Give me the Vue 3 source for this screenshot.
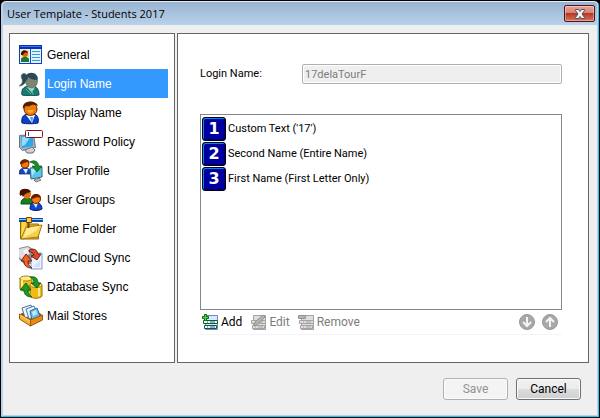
<template>
  <div class="window">
    <header class="title-bar">
      <h1 class="title">User Template - Students 2017</h1>
      <button class="close-button" type="button" aria-label="Close">
        <svg width="12" height="10" viewBox="0 0 12 10">
          <path d="M1.5.5h3L6 2.500 7.500.5h3v1L8 5l2.500 3.500v1h-3L6 7.500l-1.500 2h-3v-1L4 5 1.500 1.500z" fill="#f4f4f6" stroke="#4c5064" />
        </svg>
      </button>
    </header>

    <main class="content">
      <nav class="sidebar">
        <a
          v-for="(item, index) in sections"
          :key="item.title"
          href="#"
          class="nav-item"
          :class="{ selected: index === activeSection }"
          @click.prevent="activeSection = index"
        >
          <svg v-if="item.icon === 'general'" class="nav-icon" viewBox="0 0 24 24">
            <rect x=".5" y="3.500" width="22" height="17" fill="#dff2ff" stroke="#1040b8" />
            <path d="M0 2h23v4H0z" fill="#0830b0" />
            <path d="M1 3.500h21" stroke="#3a78e8" />
            <path d="M11.500 6v14" stroke="#1050c8" />
            <path d="M13 8.500h8M13 11.500h8M13 14.500h8M13 17.500h8" stroke="#3c98d8" />
            <path d="M2 7h8v12H2z" fill="#f6e49a" />
            <path d="M2 19v-3c2-3 6-3 8 0v3z" fill="#187838" />
            <circle cx="6" cy="11" r="3" fill="#e06010" />
            <path d="M2 12c-1-6 7-6 7-2-3-1-4 0-5 2z" fill="#401400" />
          </svg>

          <svg v-else-if="item.icon === 'login'" class="nav-icon" viewBox="0 0 24 24">
            <path d="M7 2C3 0 1 4 3 7c1 3 0 5-3 7 5 0 7-4 7-8z" fill="#244860" stroke="#5a8448" stroke-width=".7" />
            <path d="M3 23c-1-5 1-8 6-9h5c5 1 6 5 6 9-4 1-13 1-17 0z" fill="#187c68" stroke="#0c5060" />
            <path d="m8 15 5 6 3-6z" fill="#b0d4d4" />
            <ellipse cx="12.500" cy="9" rx="6" ry="7" fill="#7c8474" stroke="#5c7058" stroke-width=".7" />
            <path d="M5 12C3 0 15-2 18 4c1 1 1 3 0 4-4 0-7-1-9-3 0 3-2 3-4 7z" fill="#2c4858" />
            <path d="m13 18 1 5M7 17l5 5" stroke="#58b49c" />
          </svg>

          <svg v-else-if="item.icon === 'display'" class="nav-icon" viewBox="0 0 24 24">
            <path d="M3 22c-1-5 1-8 5-9h7c4 1 5 5 4 9-3 1-13 1-16 0z" fill="#0c40c8" stroke="#002070" />
            <path d="m7 14 6 8 3-8z" fill="#f4f8ff" />
            <path d="m11 16 2 6 1-6z" fill="#48a0e8" />
            <ellipse cx="11.500" cy="8" rx="6.500" ry="6.500" fill="#f07c08" stroke="#702000" />
            <path d="M4 8C2-1 17-2 19 5c-3-1-5-2-8 0-3 1-5-1-7 3z" fill="#541c00" />
            <path d="M8 9c2 4 5 4 7 0" fill="#ffb030" />
          </svg>

          <svg v-else-if="item.icon === 'password'" class="nav-icon" viewBox="0 0 24 24">
            <path d="m.5 5.500 14-1 2 13-13 3-3-3z" fill="#a8b0bc" stroke="#687480" />
            <path d="m2 6 12-1v11L3 18z" fill="#28a8e8" />
            <path d="m3 7 9-1-6 9-3 1z" fill="#94dcfb" />
            <path d="m6 20 7-3 3 3-2 3H8z" fill="#d0d0d6" stroke="#707070" />
            <rect x="6.500" y=".5" width="17" height="7" rx="1" fill="#fff" stroke="#8c1018" />
            <path d="M9.500 2v4" stroke="#1850a8" />
          </svg>

          <svg v-else-if="item.icon === 'profile'" class="nav-icon" viewBox="0 0 24 24">
            <path d="M0 15c0-4 2-6 6-6s6 2 6 6z" fill="#1048c8" stroke="#082060" stroke-width=".7" />
            <path d="m4 10 3 5 2-5z" fill="#e0f0ff" />
            <circle cx="6" cy="5" r="4" fill="#f47808" stroke="#903000" />
            <path d="M1 5c0-6 9-6 10-1C7 1 5 6 1 5z" fill="#702400" />
            <path d="m11 9 12-1v10l-11 2z" fill="#58c8f0" stroke="#446078" />
            <path d="m12 10 7-1-6 8z" fill="#a4e8ff" />
            <path d="m15 21 5-2 2 2-5 2z" fill="#b8bcc4" stroke="#777" />
            <path d="M11 3c5-3 8 0 9 4h3l-5 6-5-6h4c-1-2-3-3-6-4z" fill="#189028" stroke="#005410" stroke-width=".7" />
          </svg>

          <svg v-else-if="item.icon === 'groups'" class="nav-icon" viewBox="0 0 24 24">
            <path d="M2 16c0-5 3-6 6-6s6 2 6 6z" fill="#138020" stroke="#06480c" />
            <ellipse cx="8" cy="6" rx="4" ry="5" fill="#e07010" />
            <path d="M3 7C1 9 0 7 1 3c2-3 9-3 11 1-4 1-6 1-8 5z" fill="#421400" />
            <path d="M11 21c0-5 2-7 5-7s7 2 7 7c-3 2-9 2-12 0z" fill="#1048c8" stroke="#001c70" />
            <path d="m14 15 3 5 2-5z" fill="#d8ecff" />
            <circle cx="17" cy="11" r="4.500" fill="#f47c0c" stroke="#782400" />
            <path d="M12 11c0-7 10-6 10-1-5-2-6 1-10 1z" fill="#642000" />
          </svg>

          <svg v-else-if="item.icon === 'home'" class="nav-icon" viewBox="0 0 24 24">
            <path d="M1.500 4h6l2 3h10v15h-18z" fill="#e8b420" stroke="#94680c" />
            <path d="M3 5h4l-1 7-4 9z" fill="#ffd850" />
            <path d="m7 10 16-2-4 12-17 2z" fill="#f8d048" stroke="#a87c18" />
            <path d="m8 11 13-2-4 5-13 7z" fill="#ffec94" />
            <path d="M0 1h24v4H0z" fill="#1048a0" />
            <path d="M0 2.500h24" stroke="#8cc8f8" />
            <path d="M9.500 5v6" stroke="#704010" stroke-width="2" />
            <path d="M7.500.5h5v5h-5z" fill="#ffcf48" stroke="#784008" />
          </svg>

          <svg v-else-if="item.icon === 'cloud'" class="nav-icon" viewBox="0 0 24 24">
            <path d="m0 2 9-2 7 4-2 14H5l-5-5z" fill="#88888c" />
            <path d="m0 3 9-2 5 4-11 9-3-3z" fill="#dcdce2" />
            <path d="m4 5 4-2 3 3-5 2z" fill="#f8f8fa" />
            <path d="m12 13 4-6h7v16H12z" fill="#eef4ff" stroke="#849cc8" />
            <path d="m14 21 7-7v7z" fill="#d4e0f8" />
            <path d="M10 4c6-2 8 0 9 4h3l-4 6-6-4 3-1c-1-2-2-3-5-3z" fill="#e04820" stroke="#501008" stroke-width=".8" />
            <path d="M13 22c-6 0-8-3-8-7H2l5-7 6 7H9c0 3 1 5 4 7z" fill="#f46020" stroke="#501008" stroke-width=".8" />
          </svg>

          <svg v-else-if="item.icon === 'database'" class="nav-icon" viewBox="0 0 24 24">
            <path d="M1 3v11c2 3 10 3 12 0V3z" fill="#f0bb18" stroke="#987008" />
            <ellipse cx="7" cy="3.500" rx="6" ry="2.500" fill="#ffef88" stroke="#ac8010" />
            <path d="M11 10v11c2 3 10 3 12 0V10z" fill="#f0bd18" stroke="#987008" />
            <ellipse cx="17" cy="10" rx="6" ry="2.500" fill="#fff08c" stroke="#ac8010" />
            <path d="M3 5v9M20 13v8" stroke="#ffe98c" stroke-width="2" />
            <path d="M11 2c6-1 8 2 8 6h3l-4 5-6-5h3c0-3-1-4-4-6z" fill="#209824" stroke="#075810" stroke-width=".8" />
            <path d="M13 22c-6 0-8-3-8-7H1l6-7 5 7H9c0 3 1 5 4 7z" fill="#209824" stroke="#075810" stroke-width=".8" />
          </svg>

          <svg v-else class="nav-icon" viewBox="0 0 24 24">
            <path d="m1 10 14-6 8 7-11 6z" fill="#8c5008" />
            <path d="m3 4 9-3 3 10-9 3z" fill="#edf6ff" stroke="#507098" />
            <path d="m7 5 8-3 4 9-9 4z" fill="#e1f1ff" stroke="#4c7cac" />
            <path d="m11 7 7-3 3 8-8 4z" fill="#64bcf0" stroke="#386898" />
            <path d="m13 8 4-2 1 4-4 2z" fill="#c0edff" />
            <path d="m.5 10 11 6v6l-11-7z" fill="#f8b030" stroke="#985810" />
            <path d="m11.500 16 12-5v5l-12 6z" fill="#e88b14" stroke="#985810" />
            <path d="m1 11 10 6" stroke="#ffe06c" />
          </svg>
          <span class="nav-label">{{ item.title }}</span>
        </a>
      </nav>

      <section class="panel">
        <div class="field">
          <label for="login-name">Login Name:</label>
          <input id="login-name" type="text" value="17delaTourF" disabled />
        </div>

        <ol class="parts">
          <li v-for="(part, index) in parts" :key="part" class="part">
            <span class="part-number">{{ index + 1 }}</span>
            <span>{{ part }}</span>
          </li>
        </ol>

        <div class="toolbar">
          <button
            v-for="action in actions"
            :key="action.label"
            class="tool-button"
            type="button"
            :disabled="action.disabled"
          >
            <svg class="tool-icon" :class="{ muted: action.disabled }" viewBox="0 0 16 16">
              <path d="M3.500 1.500h12v14h-12z" class="sheet" />
              <path d="M1.500 6.500h14v3h-14zM2.500 11.500h12v3h-12z" class="row" />
              <path d="M5 8h1M8 8h5M5 13h1M8 13h5" class="dash" />
              <path v-if="action.label === 'Add'" d="M2.500.5h2v2h2v2h-2v2h-2v-2h-2v-2h2z" class="plus" />
              <path v-else-if="action.label === 'Edit'" d="m4 12 1-4 8-7 2 2-8 8z" class="pencil" />
              <path v-else d="M.5 1.500h7v3h-7z" class="minus" />
            </svg>
            {{ action.label }}
          </button>

          <div class="move-buttons">
            <button class="move-button" type="button" aria-label="Move down" disabled>
              <svg width="16" height="16" viewBox="0 0 16 16">
                <circle cx="8" cy="8" r="7.500" fill="#a8a8a8" stroke="#989898" />
                <path d="M8 3v9M4 8l4 4 4-4" fill="none" stroke="#f4f4f4" stroke-width="2" />
              </svg>
            </button>
            <button class="move-button" type="button" aria-label="Move up" disabled>
              <svg width="16" height="16" viewBox="0 0 16 16">
                <circle cx="8" cy="8" r="7.500" fill="#a8a8a8" stroke="#989898" />
                <path d="M8 13V4M4 8l4-4 4 4" fill="none" stroke="#f4f4f4" stroke-width="2" />
              </svg>
            </button>
          </div>
        </div>
      </section>
    </main>

    <footer class="footer">
      <button class="dialog-button" type="button" disabled>Save</button>
      <button class="dialog-button" type="button">Cancel</button>
    </footer>
  </div>
</template>

<script setup>
import { ref } from 'vue';

const activeSection = ref(1);

const sections = [
  { title: 'General', icon: 'general' },
  { title: 'Login Name', icon: 'login' },
  { title: 'Display Name', icon: 'display' },
  { title: 'Password Policy', icon: 'password' },
  { title: 'User Profile', icon: 'profile' },
  { title: 'User Groups', icon: 'groups' },
  { title: 'Home Folder', icon: 'home' },
  { title: 'ownCloud Sync', icon: 'cloud' },
  { title: 'Database Sync', icon: 'database' },
  { title: 'Mail Stores', icon: 'mail' },
];

const parts = ["Custom Text ('17')", 'Second Name (Entire Name)', 'First Name (First Letter Only)'];

const actions = [
  { label: 'Add', disabled: false },
  { label: 'Edit', disabled: true },
  { label: 'Remove', disabled: true },
];
</script>

<style>
html {
  background: #000;
}

body {
  margin: 0;
}
</style>

<style scoped>
.window {
  box-sizing: border-box;
  min-height: 100vh;
  display: flex;
  flex-direction: column;
  padding: 1px 2px 2px;
  border: 1px solid #000;
  border-radius: 6px 6px 0 0;
  background: #efefef;
  box-shadow:
    inset -1px -1px 0 #20c8ee,
    inset 0 1px 0 #e4eef8,
    inset 0 0 0 2px #b9d1ea;
  color: #000;
  font-family: Roboto, 'Liberation Sans', sans-serif;
  font-size: 12px;
  line-height: 16px;
}

button,
input {
  box-sizing: border-box;
  font: inherit;
  color: inherit;
}

.title-bar {
  display: flex;
  align-items: center;
  justify-content: space-between;
  height: 23px;
  padding: 0 2px 0 4px;
  border-radius: 4px 4px 0 0;
  background: linear-gradient(#99b4d1, #b9d1ea);
}

.title {
  margin: 0;
  font-family: 'Open Sans', sans-serif;
  font-size: 11px;
  font-weight: 400;
}

.close-button {
  display: flex;
  align-items: center;
  justify-content: center;
  width: 31px;
  height: 17px;
  padding: 0;
  border: 1px solid #50141c;
  border-radius: 2px;
  background: linear-gradient(#e6a698, #d88070 48%, #b83820 50%, #d47460);
  box-shadow: inset 0 0 0 1px rgba(255, 255, 255, 0.35);
}

.content {
  flex: 1;
  display: grid;
  grid-template-columns: 166px 1fr;
  gap: 2px;
  padding: 8px 8px 0 6px;
}

.sidebar,
.panel {
  box-sizing: border-box;
  border: 1px solid #646464;
  background: #fff;
}

.sidebar {
  padding: 6px 6px 6px 9px;
  font-family: 'Liberation Sans', Arial, sans-serif;
}

.nav-item {
  display: flex;
  align-items: center;
  gap: 2px;
  height: 29px;
  color: #000;
  text-decoration: none;
}

.nav-icon {
  flex-shrink: 0;
  width: 24px;
  height: 24px;
}

.nav-label {
  box-sizing: border-box;
  flex: 1;
  height: 29px;
  padding: 2px 0 0 2px;
  line-height: 27px;
}

.selected .nav-label {
  background: #3399ff;
  color: #fff;
}

.panel {
  display: flex;
  flex-direction: column;
  padding: 30px 26px 28px 22px;
}

.field {
  display: grid;
  grid-template-columns: 102px 1fr;
  align-items: center;
  margin-bottom: 30px;
  font-size: 11px;
}

.field input {
  width: 100%;
  height: 20px;
  padding: 0 2px;
  border: 1px solid #afafaf;
  border-radius: 2px;
  background: #efefef;
  box-shadow: inset 0 0 0 1px #fff;
  color: #7c7c7c;
}

.parts {
  flex: 1;
  margin: 0;
  padding: 1px;
  border: 1px solid #828790;
  font-size: 11px;
  list-style: none;
}

.part {
  display: flex;
  align-items: center;
  gap: 2px;
  height: 25px;
}

.part-number {
  box-sizing: border-box;
  width: 24px;
  height: 24px;
  border: 1px solid #00001c;
  border-radius: 3px;
  background: #0000a0;
  box-shadow:
    inset 1px 1px 0 #0090d8,
    inset -1px -1px 0 #000068;
  color: #fff;
  font-family: 'DejaVu Sans', sans-serif;
  font-size: 16px;
  font-weight: 700;
  line-height: 22px;
  text-align: center;
}

.toolbar {
  display: flex;
  align-items: center;
  gap: 8px;
  height: 24px;
  padding: 0 4px 0 2px;
  border-bottom: 1px solid #f3f3fc;
  margin-bottom: -1px;
}

.tool-button {
  display: flex;
  align-items: center;
  gap: 3px;
  padding: 0;
  border: 0;
  background: none;
}

.tool-button:disabled {
  color: #7c7c7c;
}

.tool-icon {
  width: 16px;
  height: 16px;
}

.tool-icon .sheet {
  fill: #d8e8ff;
  stroke: #7084c8;
}

.tool-icon .row {
  fill: #effaf0;
  stroke: #086028;
}

.tool-icon .dash {
  stroke: #2858c8;
}

.tool-icon .plus {
  fill: #58d040;
  stroke: #087010;
}

.tool-icon.muted path {
  fill: #dedede;
  stroke: #a4a4a4;
}

.tool-icon.muted .pencil,
.tool-icon.muted .minus {
  fill: #b4b4b4;
  stroke: #929292;
}

.move-buttons {
  display: flex;
  gap: 7px;
  margin-left: auto;
}

.move-button {
  display: flex;
  padding: 0;
  border: 0;
  background: none;
}

.footer {
  display: flex;
  justify-content: flex-end;
  gap: 8px;
  padding: 15px 16px 15px;
}

.dialog-button {
  width: 65px;
  height: 22px;
  padding: 0;
  border: 1px solid #707070;
  border-radius: 3px;
  background: linear-gradient(#f2f2f2, #ebebeb 49%, #dddddd 50%, #cfcfcf);
  box-shadow: inset 0 0 0 1px #fafafa;
}

.dialog-button:disabled {
  border-color: #adb2b5;
  background: #f4f4f4;
  color: #939393;
}
</style>
